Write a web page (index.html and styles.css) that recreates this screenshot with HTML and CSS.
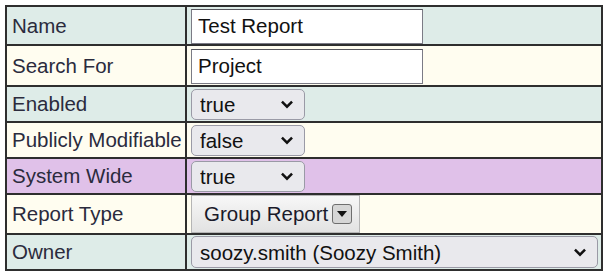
FILE: index.html
```html
<!DOCTYPE html>
<html lang="en">
<head>
    <meta charset="UTF-8">
    <title>Report Settings</title>
    <link rel="stylesheet" href="styles.css">
</head>
<body>

    <!-- Report settings form -->
    <table class="settings">
        <tr class="row-teal row-text">
            <td class="label">Name</td>
            <td class="field"><input type="text" class="text-input" value="Test Report"></td>
        </tr>
        <tr class="row-cream row-text row-tall">
            <td class="label">Search For</td>
            <td class="field"><input type="text" class="text-input" value="Project"></td>
        </tr>
        <tr class="row-teal">
            <td class="label">Enabled</td>
            <td class="field">
                <span class="select-wrap small">
                    <select>
                        <option selected>true</option>
                        <option>false</option>
                    </select>
                    <svg class="chevron" viewBox="0 0 12 8"><path d="M1.5 1.5 L6 6 L10.5 1.5" /></svg>
                </span>
            </td>
        </tr>
        <tr class="row-cream">
            <td class="label">Publicly Modifiable</td>
            <td class="field">
                <span class="select-wrap small">
                    <select>
                        <option>true</option>
                        <option selected>false</option>
                    </select>
                    <svg class="chevron" viewBox="0 0 12 8"><path d="M1.5 1.5 L6 6 L10.5 1.5" /></svg>
                </span>
            </td>
        </tr>
        <tr class="row-purple">
            <td class="label">System Wide</td>
            <td class="field">
                <span class="select-wrap small">
                    <select>
                        <option selected>true</option>
                        <option>false</option>
                    </select>
                    <svg class="chevron" viewBox="0 0 12 8"><path d="M1.5 1.5 L6 6 L10.5 1.5" /></svg>
                </span>
            </td>
        </tr>
        <tr class="row-cream row-button">
            <td class="label">Report Type</td>
            <td class="field">
                <button type="button" class="menu-button">Group Report <span class="menu-arrow"></span></button>
            </td>
        </tr>
        <tr class="row-teal">
            <td class="label">Owner</td>
            <td class="field">
                <span class="select-wrap wide">
                    <select>
                        <option selected>soozy.smith (Soozy Smith)</option>
                    </select>
                    <svg class="chevron" viewBox="0 0 12 8"><path d="M1.5 1.5 L6 6 L10.5 1.5" /></svg>
                </span>
            </td>
        </tr>
    </table>

</body>
</html>
```

FILE: styles.css
```css
body {
    margin: 0;
    padding: 5px 0 0 5px;
    font-family: "Liberation Sans", Arial, sans-serif;
    background-color: #ffffff;
}

.settings {
    border-collapse: collapse;
    border: 2px solid #3a3a3a;
    width: 598px;
    font-size: 20.5px;
}

.settings td {
    border: 2px solid #2e2e2e;
    padding: 0;
    vertical-align: middle;
    height: 34px;
}

.label {
    width: 174px;
    padding: 0 0 0 5px !important;
    color: #2b2b3d;
    white-space: nowrap;
}

.field {
    padding: 0 3px 0 4px !important;
}

.row-teal td {
    background-color: #deece8;
}

.row-cream td {
    background-color: #fffdf0;
}

.row-purple td {
    background-color: #e0c1e9;
}

.row-text td {
    height: 37px;
}

.row-tall td {
    height: 39px;
}

.row-button td {
    height: 35px;
}

.text-input {
    box-sizing: border-box;
    width: 232px;
    height: 35px;
    margin: 1px 0 0 0;
    padding: 2px 6px;
    font-family: "Liberation Sans", Arial, sans-serif;
    font-size: 20.5px;
    color: #111;
    border: 1px solid #7b7b85;
    border-top-color: #55555c;
    border-radius: 0;
    background: #fff;
    display: block;
}

/* custom select look */
.select-wrap {
    position: relative;
    display: block;
}

.select-wrap select {
    -webkit-appearance: none;
    appearance: none;
    box-sizing: border-box;
    width: 100%;
    height: 31px;
    padding: 0 30px 0 8px;
    font-family: "Liberation Sans", Arial, sans-serif;
    font-size: 20.5px;
    color: #111;
    background: #e9e9ed;
    border: 1px solid #9a9aa6;
    border-radius: 5px;
    display: block;
}

.select-wrap.small {
    width: 114px;
}

.select-wrap.wide {
    width: 407px;
}

.select-wrap.wide select {
    height: 32px;
}

.chevron {
    position: absolute;
    right: 11px;
    top: 50%;
    width: 14px;
    height: 9px;
    margin-top: -4px;
    pointer-events: none;
}

.chevron path {
    fill: none;
    stroke: #111;
    stroke-width: 2.2;
}

.menu-button {
    box-sizing: border-box;
    width: 169px;
    height: 38px;
    padding: 0 6px 0 12px;
    font-family: "Liberation Sans", Arial, sans-serif;
    font-size: 20.5px;
    color: #1a1a2a;
    text-align: left;
    border: 1px solid #b5b5b5;
    border-radius: 0;
    background: linear-gradient(#f7f7f7, #e2e2e2);
    display: flex;
    align-items: center;
    gap: 4px;
}

.menu-arrow {
    position: relative;
    width: 20px;
    height: 20px;
    box-sizing: border-box;
    border: 1px solid #6e6e6e;
    border-radius: 3px;
    background: #d6d6d6;
    display: inline-block;
}

.menu-arrow::after {
    content: "";
    position: absolute;
    left: 4px;
    top: 6px;
    border-left: 5px solid transparent;
    border-right: 5px solid transparent;
    border-top: 6px solid #111;
}
```
